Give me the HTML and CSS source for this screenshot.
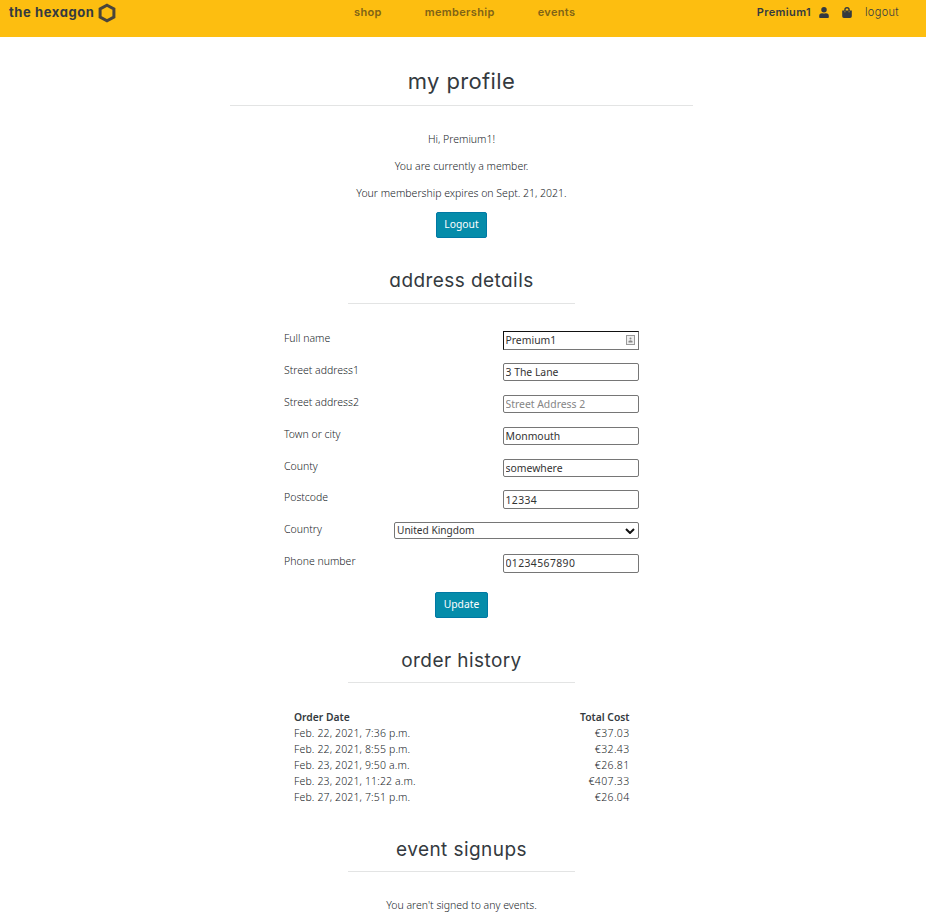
FILE: index.html
```html
<!DOCTYPE html>
<html lang="en">
<head>
<meta charset="utf-8">
<title>the hexagon</title>
<link rel="stylesheet" href="styles.css">
</head>
<body>
<header class="navbar">
  <a class="brand"><span class="brand-name">the hexagon</span>
    <svg class="hexagon" viewBox="0 0 18 20"><path d="M9 2.2 15.9 6v8L9 17.8 2.1 14V6z"/></svg></a>
  <nav class="menu"><a>shop</a><a>membership</a><a>events</a></nav>
  <div class="account">
    <span class="username">Premium1</span>
    <svg class="icon user" viewBox="0 0 448 512"><path d="M224 256A128 128 0 1 0 224 0a128 128 0 0 0 0 256zm90 32h-17a174 174 0 0 1-146 0h-17A134 134 0 0 0 0 422v42c0 27 21 48 48 48h352c27 0 48-21 48-48v-42a134 134 0 0 0-134-134z"/></svg>
    <svg class="icon bag" viewBox="0 0 448 512"><path d="M352 160v-32a128 128 0 0 0-256 0v32H0v272a80 80 0 0 0 80 80h288a80 80 0 0 0 80-80V160zm-192-32a64 64 0 0 1 128 0v32H160zm160 120a24 24 0 1 1 0-48 24 24 0 0 1 0 48zm-192 0a24 24 0 1 1 0-48 24 24 0 0 1 0 48z"/></svg>
    <a class="logout-link">logout</a>
  </div>
</header>
<main class="page">
  <h1 class="title">my profile</h1>
  <section class="intro">
    <p>Hi, Premium1!</p>
    <p>You are currently a member.</p>
    <p>Your membership expires on Sept. 21, 2021.</p>
    <button class="btn">Logout</button>
  </section>
  <h2 class="subtitle address-title">address details</h2>
  <form class="address">
    <label class="row"><span>Full name</span><span class="field"><input class="active" value="Premium1"><svg class="card" viewBox="0 0 9 10"><rect x=".5" y=".5" width="8" height="9"/><circle cx="4.5" cy="3.5" r="1"/><path d="M2.5 7.5V6l2-.8 2 .8v1.5z"/></svg></span></label>
    <label class="row"><span>Street address1</span><input value="3 The Lane"></label>
    <label class="row"><span>Street address2</span><input placeholder="Street Address 2"></label>
    <label class="row"><span>Town or city</span><input value="Monmouth"></label>
    <label class="row"><span>County</span><input value="somewhere"></label>
    <label class="row"><span>Postcode</span><input class="digits" value="12334"></label>
    <label class="row"><span>Country</span><span class="field"><select><option>United Kingdom</option></select><svg class="chevron" viewBox="0 0 10 6"><path d="M1 1l4 4 4-4"/></svg></span></label>
    <label class="row"><span>Phone number</span><input class="digits" value="01234567890"></label>
    <button class="btn update" type="button">Update</button>
  </form>
  <h2 class="subtitle orders-title">order history</h2>
  <table class="orders">
    <tr><th>Order Date</th><th>Total Cost</th></tr>
    <tr><td>Feb. 22, 2021, 7:36 p.m.</td><td>€37.03</td></tr>
    <tr><td>Feb. 22, 2021, 8:55 p.m.</td><td>€32.43</td></tr>
    <tr><td>Feb. 23, 2021, 9:50 a.m.</td><td>€26.81</td></tr>
    <tr><td>Feb. 23, 2021, 11:22 a.m.</td><td>€407.33</td></tr>
    <tr><td>Feb. 27, 2021, 7:51 p.m.</td><td>€26.04</td></tr>
  </table>
  <h2 class="subtitle events-title">event signups</h2>
  <p class="signups">You aren't signed to any events.</p>
</main>
</body>
</html>
```
FILE: styles.css
```css
* { box-sizing: border-box; }
body {
  margin: 0;
  height: 912px;
  overflow: hidden;
  background: #fff;
  color: #212529;
  font: 10.5px/16px "Noto Sans", sans-serif;
  font-weight: 300;
}
.navbar {
  display: grid;
  grid-template-columns: 354px 1fr auto;
  height: 37px;
  padding: 3px 27px 0 9px;
  background: #fdbe10;
  color: #343a40;
  font: 600 11px/19px Inter, sans-serif;
  font-feature-settings: "cv11";
  letter-spacing: .34px;
}
.brand { display: flex; align-items: flex-start; font-size: 13px; font-weight: 700; gap: 4px; letter-spacing: .58px; }
.hexagon { width: 18px; height: 20px; fill: none; stroke: #4a453b; stroke-width: 3; }
.menu { display: flex; gap: 43px; margin-left: -9px; color: #7f6316; }
.account { display: flex; align-items: flex-start; }
.icon { height: 11px; width: 10px; margin-top: 4px; fill: #343a40; }
.user { margin-left: 8px; }
.bag { margin: 4px 13px 0 13px; }
.logout-link { font-weight: 300; }
.page { width: 463px; margin-left: 230px; }
.title, .subtitle {
  margin: 0 auto;
  border-bottom: 1px solid #e3e4e4;
  color: #343a40;
  font-family: Inter, sans-serif;
  font-feature-settings: "cv11";
  font-weight: 400;
  text-align: center;
}
.title { height: 69px; padding-top: 29px; font-size: 22px; line-height: 30px; letter-spacing: .38px; }
.subtitle { width: 227px; height: 38px; font-size: 19px; line-height: 29px; letter-spacing: .43px; }
.intro { padding-top: 25px; text-align: center; }
p { margin: 0 0 11px; text-align: center; }
.btn {
  display: block;
  width: 51px;
  height: 26px;
  margin: 0 auto;
  padding: 0 0 2px;
  border: 1px solid #0078a4;
  border-radius: 2px;
  background: #058caa;
  color: #fff;
  font: 10.3px/16px "Noto Sans", sans-serif;
}
.address-title { margin-top: 28px; }
.address { width: 355px; margin: 27px 0 0 54px; }
.row { display: flex; justify-content: space-between; align-items: flex-start; height: 31.88px; }
.row > span:first-child { margin-top: -1px; }
.field { position: relative; display: flex; }
.card { position: absolute; right: 4px; top: 4px; width: 9px; height: 10px; fill: #aaa; stroke: #999; stroke-width: 1; }
.card rect { fill: #eee; }
.card path, .card circle { stroke: none; fill: #888; }
.chevron { position: absolute; right: 4px; top: 6px; width: 10px; height: 6px; fill: none; stroke: #111; stroke-width: 2; }
input, select {
  width: 136px;
  height: 18.6px;
  padding: 0 1.5px;
  border: 1px solid #767676;
  border-radius: 2px;
  background: #fff;
  color: #333;
  font: 10.4px/16px "Noto Sans", sans-serif;
}
input::placeholder { color: #858585; }
.digits { letter-spacing: .4px; }
.active { border-color: #111 #767676 #767676 #111; border-radius: 0; }
select { appearance: none; width: 245px; height: 17px; padding: 0 0 1px 2px; font-size: 10.1px; line-height: 14px; }
.update { width: 53px; margin-top: 6px; }
.orders-title { margin-top: 27px; line-height: 31px; }
.orders { width: 335.5px; margin: 26px 0 0 64px; border-collapse: collapse; }
.orders th, .orders td { padding: 0; height: 16px; text-align: left; }
.orders td { letter-spacing: .14px; }
.orders th { color: #343a40; font-weight: 600; font-size: 10.3px; }
.orders tr > :last-child { text-align: right; }
.orders td:last-child { letter-spacing: .35px; }
.events-title { margin-top: 29px; line-height: 31px; }
.signups { margin-top: 25px; }
```
